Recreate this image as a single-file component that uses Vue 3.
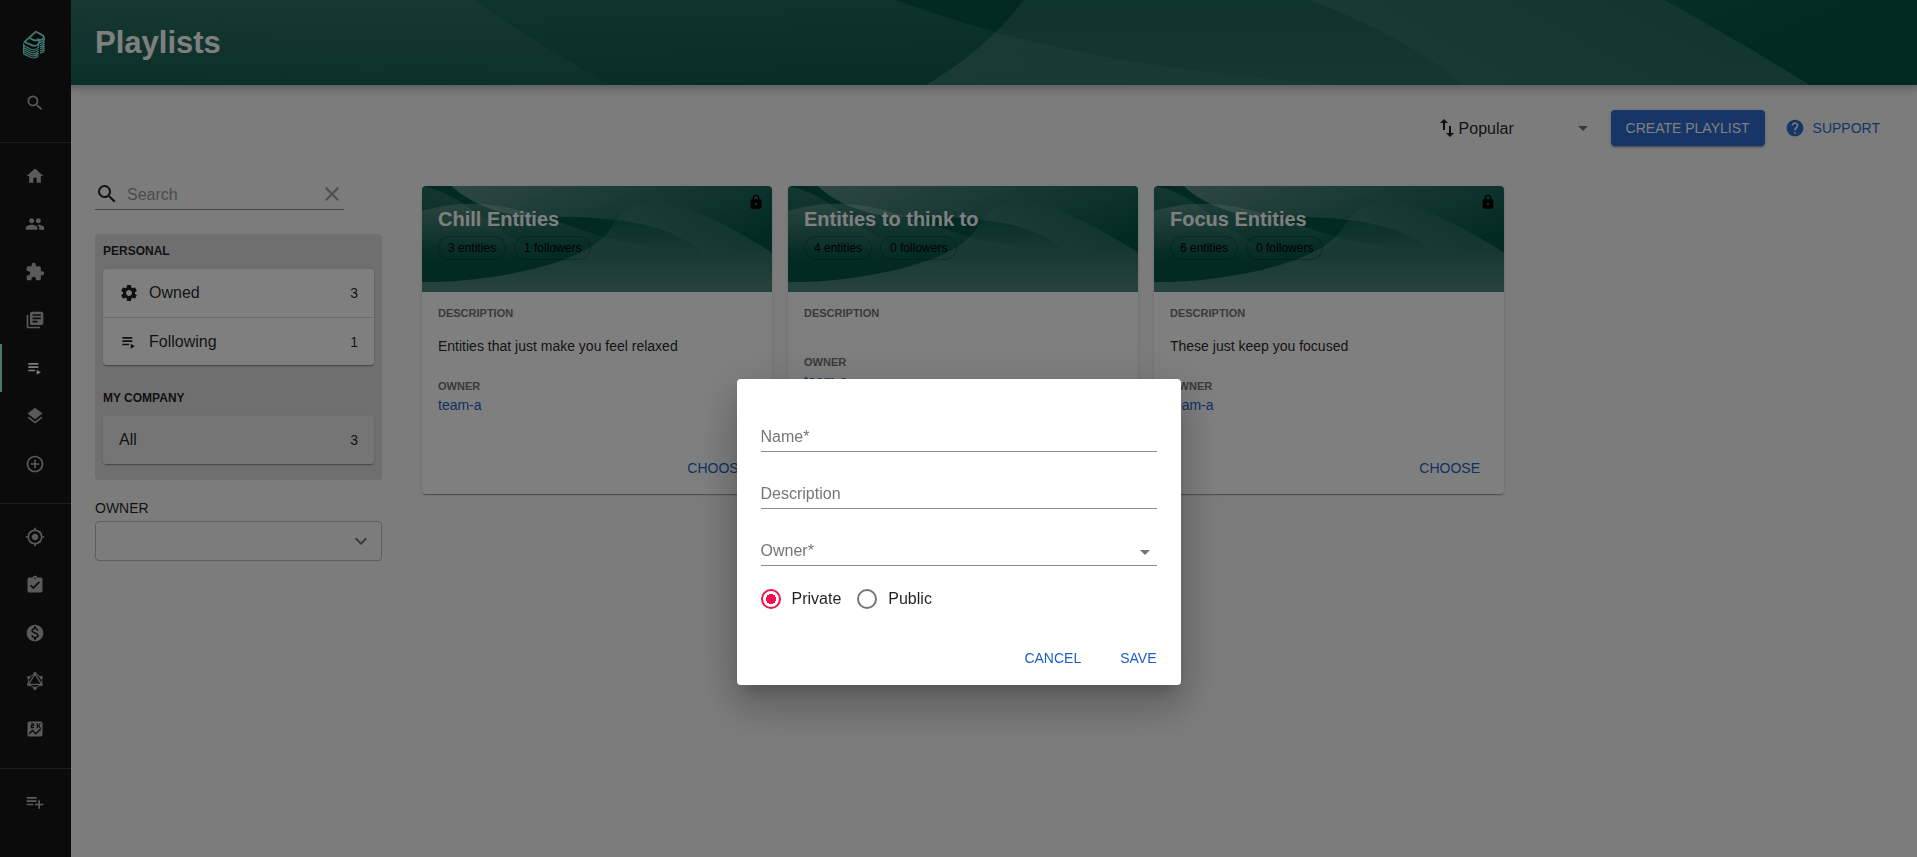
<script setup>
import { ref, h } from 'vue'

const icons = {
  search: 'M15.5 14h-.79l-.28-.27A6.471 6.471 0 0 0 16 9.5 6.5 6.5 0 1 0 9.5 16c1.61 0 3.09-.59 4.23-1.57l.27.28v.79l5 4.99L20.49 19l-4.99-5zm-6 0C7.01 14 5 11.99 5 9.5S7.01 5 9.5 5 14 7.01 14 9.5 11.99 14 9.5 14z',
  home: 'M10 20v-6h4v6h5v-8h3L12 3 2 12h3v8z',
  people: 'M16 11c1.66 0 2.99-1.34 2.99-3S17.66 5 16 5c-1.66 0-3 1.34-3 3s1.34 3 3 3zm-8 0c1.66 0 2.99-1.34 2.99-3S9.66 5 8 5C6.34 5 5 6.34 5 8s1.34 3 3 3zm0 2c-2.33 0-7 1.17-7 3.5V19h14v-2.5c0-2.33-4.67-3.5-7-3.5zm8 0c-.29 0-.62.02-.97.05 1.16.84 1.97 1.97 1.97 3.45V19h6v-2.5c0-2.33-4.67-3.5-7-3.5z',
  extension: 'M20.5 11H19V7c0-1.1-.9-2-2-2h-4V3.5C13 2.12 11.88 1 10.5 1S8 2.12 8 3.5V5H4c-1.1 0-1.99.9-1.99 2v3.8H3.5c1.49 0 2.7 1.21 2.7 2.7s-1.21 2.7-2.7 2.7H2V20c0 1.1.9 2 2 2h3.8v-1.5c0-1.49 1.21-2.7 2.7-2.7 1.49 0 2.7 1.21 2.7 2.7V22H17c1.1 0 2-.9 2-2v-4h1.5c1.38 0 2.5-1.12 2.5-2.5S21.88 11 20.5 11z',
  library: 'M4 6H2v14c0 1.1.9 2 2 2h14v-2H4V6zm16-4H8c-1.1 0-2 .9-2 2v12c0 1.1.9 2 2 2h12c1.1 0 2-.9 2-2V4c0-1.1-.9-2-2-2zm-1 9H9V9h10v2zm-4 4H9v-2h6v2zm4-8H9V5h10v2z',
  playlistPlay: 'M4 10h12v2H4zm0-4h12v2H4zm0 8h8v2H4zm10 0v6l5-3z',
  layers: 'M11.99 18.54l-7.37-5.73L3 14.07l9 7 9-7-1.63-1.27-7.38 5.74zM12 16l7.36-5.73L21 9l-9-7-9 7 1.63 1.27L12 16z',
  addCircle: 'M13 7h-2v4H7v2h4v4h2v-4h4v-2h-4V7zm-1-5C6.48 2 2 6.48 2 12s4.48 10 10 10 10-4.48 10-10S17.52 2 12 2zm0 18c-4.41 0-8-3.59-8-8s3.59-8 8-8 8 3.59 8 8-3.59 8-8 8z',
  location: 'M12 8c-2.21 0-4 1.79-4 4s1.79 4 4 4 4-1.79 4-4-1.79-4-4-4zm8.94 3A8.994 8.994 0 0 0 13 3.06V1h-2v2.06A8.994 8.994 0 0 0 3.06 11H1v2h2.06A8.994 8.994 0 0 0 11 20.94V23h2v-2.06A8.994 8.994 0 0 0 20.94 13H23v-2h-2.06zM12 19c-3.87 0-7-3.13-7-7s3.13-7 7-7 7 3.13 7 7-3.13 7-7 7z',
  assignment: 'M19 3h-4.18C14.4 1.84 13.3 1 12 1c-1.3 0-2.4.84-2.82 2H5c-1.1 0-2 .9-2 2v14c0 1.1.9 2 2 2h14c1.1 0 2-.9 2-2V5c0-1.1-.9-2-2-2zm-7 0c.55 0 1 .45 1 1s-.45 1-1 1-1-.45-1-1 .45-1 1-1zm-2 14l-4-4 1.41-1.41L10 14.17l6.59-6.59L18 9l-8 8z',
  money: 'M12 2C6.48 2 2 6.48 2 12s4.48 10 10 10 10-4.48 10-10S17.52 2 12 2zm1.41 16.09V20h-2.67v-1.93c-1.71-.36-3.16-1.46-3.27-3.4h1.96c.1 1.05.82 1.87 2.65 1.87 1.96 0 2.4-.98 2.4-1.59 0-.83-.44-1.61-2.67-2.14-2.48-.6-4.18-1.62-4.18-3.67 0-1.72 1.39-2.84 3.11-3.21V4h2.67v1.95c1.86.45 2.79 1.86 2.85 3.39H14.3c-.05-1.11-.64-1.87-2.22-1.87-1.5 0-2.4.68-2.4 1.64 0 .84.65 1.39 2.67 1.91s4.18 1.39 4.18 3.91c-.01 1.83-1.38 2.83-3.12 3.16z',
  score: 'M19 3H5c-1.1 0-2 .9-2 2v14c0 1.1.9 2 2 2h14c1.1 0 2-.9 2-2V5c0-1.1-.9-2-2-2zm-5 2h1.5v3l2-3h1.7l-2 3 2 3h-1.7l-2-3v3H14V5zM7 7.25h2.5V6.5H7V5h4v3.75H8.5v.75H11V11H7V7.25zM19 13l-6 6-4-4-4 4v-2.5l4-4 4 4 6-6V13z',
  playlistAdd: 'M14 10H2v2h12v-2zm0-4H2v2h12V6zm4 8v-4h-2v4h-4v2h4v4h2v-4h4v-2h-4zM2 16h8v-2H2v2z',
  settings: 'M19.14 12.94c.04-.3.06-.61.06-.94 0-.32-.02-.64-.07-.94l2.03-1.58c.18-.14.23-.41.12-.61l-1.92-3.32c-.12-.22-.37-.29-.59-.22l-2.39.96c-.5-.38-1.03-.7-1.62-.94l-.36-2.54c-.04-.24-.24-.41-.48-.41h-3.84c-.24 0-.43.17-.47.41l-.36 2.54c-.59.24-1.13.57-1.62.94l-2.39-.96c-.22-.08-.47 0-.59.22L2.74 8.87c-.12.21-.08.47.12.61l2.03 1.58c-.05.3-.09.63-.09.94s.02.64.07.94l-2.03 1.58c-.18.14-.23.41-.12.61l1.92 3.32c.12.22.37.29.59.22l2.39-.96c.5.38 1.03.7 1.62.94l.36 2.54c.05.24.24.41.48.41h3.84c.24 0 .44-.17.47-.41l.36-2.54c.59-.24 1.13-.56 1.62-.94l2.39.96c.22.08.47 0 .59-.22l1.92-3.32c.12-.22.07-.47-.12-.61l-2.01-1.58zM12 15.6c-1.98 0-3.6-1.62-3.6-3.6s1.62-3.6 3.6-3.6 3.6 1.62 3.6 3.6-1.62 3.6-3.6 3.6z',
  clear: 'M19 6.41L17.59 5 12 10.59 6.41 5 5 6.41 10.59 12 5 17.59 6.41 19 12 13.41 17.59 19 19 17.59 13.41 12z',
  help: 'M12 2C6.48 2 2 6.48 2 12s4.48 10 10 10 10-4.48 10-10S17.52 2 12 2zm1 17h-2v-2h2v2zm2.07-7.75l-.9.92C13.45 12.9 13 13.5 13 15h-2v-.5c0-1.1.45-2.1 1.17-2.83l1.24-1.26c.37-.36.59-.86.59-1.41 0-1.1-.9-2-2-2s-2 .9-2 2H8c0-2.21 1.79-4 4-4s4 1.79 4 4c0 .88-.36 1.68-.93 2.25z',
  lock: 'M18 8h-1V6c0-2.76-2.24-5-5-5S7 3.24 7 6v2H6c-1.1 0-2 .9-2 2v10c0 1.1.9 2 2 2h12c1.1 0 2-.9 2-2V10c0-1.1-.9-2-2-2zm-6 9c-1.1 0-2-.9-2-2s.9-2 2-2 2 .9 2 2-.9 2-2 2zm3.1-9H8.9V6c0-1.71 1.39-3.1 3.1-3.1 1.71 0 3.1 1.39 3.1 3.1v2z',
  sort: 'M9 3L5 6.99h3V14h2V6.99h3L9 3zm7 14.01V10h-2v7.01h-3L15 21l4-3.99h-3z',
  dropDown: 'M7 10l5 5 5-5z',
  expand: 'M16.59 8.59L12 13.17 7.41 8.59 6 10l6 6 6-6z',
  graph: 'M12 1.2a2 2 0 0 1 1.9 2.6l4.3 2.5a2 2 0 1 1 2.4 3.2v5a2 2 0 1 1-2.400 3.200l-4.300 2.500a2 2 0 1 1-3.800 0l-4.300-2.500a2 2 0 1 1-2.400-3.200v-5a2 2 0 1 1 2.400-3.200l4.300-2.500A2 2 0 0 1 12 1.200zM10.500 4.800L6.500 7.100a2 2 0 0 1-2.100 2.400v4.700zM13.500 4.800l6.100 9.400V9.500a2 2 0 0 1-2.100-2.400zM12 5.200L5.500 15.400h13zM6.500 16.800l4.100 2.400a2 2 0 0 1 2.800 0l4.100-2.400z',
}

const Icon = (props) =>
  h('svg', { viewBox: '0 0 24 24', class: 'icon', 'aria-hidden': 'true' }, [
    h('path', { d: icons[props.name], 'fill-rule': 'evenodd' }),
  ])
Icon.props = ['name']

const Wave = (props) => {
  const id = props.uid
  const gradient = (n, opacity, x1, y1, x2, y2) =>
    h('linearGradient', { id: `${id}-${n}`, x1, y1, x2, y2, gradientUnits: 'userSpaceOnUse' }, [
      h('stop', { 'stop-color': '#fff', 'stop-opacity': opacity }),
      h('stop', { offset: 1, 'stop-color': '#fff', 'stop-opacity': 0 }),
    ])
  const shape = (n, d) => h('path', { d, fill: `url(#${id}-${n})` })
  return h('svg', { viewBox: '0 0 1368 400', preserveAspectRatio: props.fit, 'aria-hidden': 'true' }, [
    h('defs', [
      gradient(0, 0.75, 602, -960.5, 1093.5, 272),
      gradient(1, 0.3, 684, 400, 684, 40),
      gradient(2, 0.33, 424, -48.1, 434.5, 275.1),
      gradient(3, 0.18, 500, 0, 470, 300),
    ]),
    shape(0, 'M437 116C223 116 112 0 112 0h1256v400c-82 0-225-21-282-109-112-175-436-175-649-175z'),
    shape(1, 'M1368 400V282C891-29 788 40 711 161 608 324 121 372 0 361v39h1368z'),
    shape(2, 'M1368 244v156H0V94c92-24 198-46 375 0l135 41c176 51 195 109 858 109z'),
    shape(3, 'M1252 400h116c-14-7-35-14-116-16-663-14-837-128-1013-258l-85-61C98 28 46 8 0 0v400h1252z'),
  ])
}
Wave.props = ['uid', 'fit']

const navGroups = [
  [
    { icon: 'home', label: 'Home' },
    { icon: 'people', label: 'Teams' },
    { icon: 'extension', label: 'APIs' },
    { icon: 'library', label: 'Docs' },
    { icon: 'playlistPlay', label: 'Playlists', active: true },
    { icon: 'layers', label: 'Explore' },
    { icon: 'addCircle', label: 'Create' },
  ],
  [
    { icon: 'location', label: 'Tech Radar' },
    { icon: 'assignment', label: 'Tasks' },
    { icon: 'money', label: 'Cost Insights' },
    { icon: 'graph', label: 'GraphiQL' },
    { icon: 'score', label: 'Score Board' },
  ],
  [{ icon: 'playlistAdd', label: 'Shortcuts' }],
]

const filters = [
  {
    title: 'PERSONAL',
    items: [
      { icon: 'settings', label: 'Owned', count: 3 },
      { icon: 'playlistPlay', label: 'Following', count: 1 },
    ],
  },
  { title: 'MY COMPANY', items: [{ label: 'All', count: 3, selected: true }] },
]

const playlists = [
  { name: 'Chill Entities', entities: 3, followers: 1, description: 'Entities that just make you feel relaxed', owner: 'team-a', locked: true },
  { name: 'Entities to think to', entities: 4, followers: 0, description: '', owner: 'team-a', locked: false },
  { name: 'Focus Entities', entities: 6, followers: 0, description: 'These just keep you focused', owner: 'team-a', locked: true },
]

const sort = ref('Popular')
const search = ref('')
const form = ref({ name: '', description: '', owner: '', access: 'private' })
</script>

<template>
  <div class="page">
    <nav class="sidebar" aria-label="Main">
      <a class="logo" href="#" aria-label="Backstage">
        <svg viewBox="0 0 22 28" aria-hidden="true">
          <path class="bill" d="M1 11.300L12 1.300c.7-.6 1.300-.6 2.100-.1l5.600 3.300c1.300.8 1.500 2.100.5 3.100-1.100 1.200-2.700 1.500-4.300 1 .9 1.700.6 3.400-.8 4.700-2 1.800-4.600 1.900-7 .6L1.600 11M6.500 6.700l3.700 2.200c1.700.9 3.400.8 5.700-.3" />
          <path d="M.6 12.200v2.300l7 3.500c2.900 1.200 6.300.3 8-2v-2.800M.6 14v9M.6 16.600l7 3.400c2.900 1.200 6.300.3 8-2M.6 18.700l7 3.400c2.900 1.200 6.300.3 8-2M.6 20.800l7 3.400c2.900 1.200 6.300.3 8-2M.6 22.900l7 3.400c2.900 1.200 6.300.3 8-2M17 11.400c2.200-.2 3.900-1.300 4.400-2.900V6.800M17 13.500c2.200-.2 3.900-1.300 4.400-2.900M17 15.600c2.200-.2 3.900-1.300 4.400-2.900M17 17.700c2.200-.2 3.900-1.300 4.400-2.900M17 19.800c2.200-.2 3.900-1.300 4.400-2.900M17 21.900c2.200-.2 3.900-1.300 4.400-2.900" />
        </svg>
      </a>
      <button class="nav-item" type="button" aria-label="Search"><Icon name="search" /></button>
      <template v-for="(group, i) in navGroups" :key="i">
        <hr />
        <a v-for="item in group" :key="item.label" href="#" class="nav-item" :class="{ active: item.active }" :aria-label="item.label">
          <Icon :name="item.icon" />
        </a>
      </template>
    </nav>

    <div class="body">
      <header class="header">
        <Wave uid="head" fit="xMidYMid slice" class="wave" />
        <h1>Playlists</h1>
      </header>

      <main class="content">
        <div class="toolbar">
          <div class="sort">
            <Icon name="sort" />
            <select v-model="sort" aria-label="Sort by">
              <option>Popular</option>
              <option>Alphabetical</option>
            </select>
            <Icon name="dropDown" class="arrow" />
          </div>
          <button class="create" type="button">CREATE PLAYLIST</button>
          <button class="support" type="button"><Icon name="help" />SUPPORT</button>
        </div>

        <div class="columns">
          <aside>
            <div class="search">
              <Icon name="search" />
              <input v-model="search" type="text" placeholder="Search" aria-label="Search" />
              <button type="button" aria-label="Clear"><Icon name="clear" /></button>
            </div>
            <div class="filters">
              <section v-for="group in filters" :key="group.title">
                <h2>{{ group.title }}</h2>
                <ul>
                  <li v-for="item in group.items" :key="item.label">
                    <button type="button" :class="{ selected: item.selected }">
                      <Icon v-if="item.icon" :name="item.icon" />
                      <span class="name">{{ item.label }}</span>
                      <span class="count">{{ item.count }}</span>
                    </button>
                  </li>
                </ul>
              </section>
            </div>
            <label class="owner-label" for="owner-filter">OWNER</label>
            <div class="owner-box">
              <input id="owner-filter" type="text" />
              <Icon name="expand" />
            </div>
          </aside>

          <div class="cards">
            <article v-for="(list, i) in playlists" :key="list.name" class="card">
              <div class="card-head">
                <Wave :uid="'card' + i" fit="xMinYMin slice" class="wave" />
                <Icon v-if="list.locked" name="lock" class="lock" />
                <h3>{{ list.name }}</h3>
                <div class="chips">
                  <span>{{ list.entities }} entities</span>
                  <span>{{ list.followers }} followers</span>
                </div>
              </div>
              <div class="card-body">
                <h4>DESCRIPTION</h4>
                <p>{{ list.description }}</p>
                <h4>OWNER</h4>
                <a href="#">{{ list.owner }}</a>
              </div>
              <div class="card-actions"><button type="button">CHOOSE</button></div>
            </article>
          </div>
        </div>
      </main>
    </div>

    <div class="backdrop">
      <form class="dialog" role="dialog" aria-modal="true" aria-label="Create playlist" @submit.prevent>
        <div class="fields">
          <input v-model="form.name" type="text" placeholder="Name*" aria-label="Name" />
          <input v-model="form.description" type="text" placeholder="Description" aria-label="Description" />
          <div class="select">
            <select v-model="form.owner" aria-label="Owner">
              <option value="" disabled>Owner*</option>
              <option>team-a</option>
            </select>
            <Icon name="dropDown" />
          </div>
        </div>
        <div class="radios">
          <label><input v-model="form.access" type="radio" name="access" value="private" />Private</label>
          <label><input v-model="form.access" type="radio" name="access" value="public" />Public</label>
        </div>
        <div class="dialog-actions">
          <button type="button">CANCEL</button>
          <button type="submit">SAVE</button>
        </div>
      </form>
    </div>
  </div>
</template>

<style>
body {
  margin: 0;
  background: #f8f8f8;
}
</style>

<style scoped>
.page,
.page * {
  box-sizing: border-box;
}
.page {
  display: flex;
  min-height: 100vh;
  font-family: "Helvetica Neue", "Liberation Sans", Arial, sans-serif;
  font-size: 14px;
  color: rgba(0, 0, 0, 0.87);
}
button,
input,
select {
  font: inherit;
  color: inherit;
  background: none;
  border: 0;
  border-radius: 0;
  padding: 0;
  margin: 0;
  outline: 0;
}
select {
  appearance: none;
}
a {
  color: #1f5fc4;
  text-decoration: none;
}
h1, h2, h3, h4, p, ul {
  margin: 0;
  padding: 0;
}
.icon {
  width: 20px;
  height: 20px;
  fill: currentColor;
  flex: none;
}

.sidebar {
  width: 71px;
  flex: none;
  background: #171717;
  display: flex;
  flex-direction: column;
  position: relative;
  z-index: 1;
}
.logo {
  height: 79px;
  padding: 31px 0 0 23px;
}
.logo svg {
  width: 22px;
  height: 28px;
  display: block;
  fill: none;
  stroke: #7df3e1;
  stroke-width: 1.2;
}
.logo .bill {
  stroke-width: 1.8;
}
.nav-item {
  height: 48px;
  display: flex;
  align-items: center;
  justify-content: center;
  color: #b5b5b5;
  border-left: 2px solid transparent;
  border-right: 3px solid transparent;
}
.nav-item.active {
  color: #fff;
  border-left-color: #9bf0e1;
}
hr {
  width: 100%;
  height: 1px;
  border: 0;
  margin: 15px 0 9px;
  background: #383838;
}

.body {
  flex: 1;
  min-width: 0;
}
.header {
  position: relative;
  height: 85px;
  padding: 0 24px;
  display: flex;
  align-items: center;
  background: #045446;
  box-shadow: 0 0 8px 3px rgba(20, 20, 20, 0.3);
}
.wave {
  position: absolute;
  inset: 0;
  width: 100%;
  height: 100%;
}
h1 {
  position: relative;
  font-size: 31px;
  line-height: 38px;
  color: #fff;
}
.content {
  padding: 25px 29px 24px 24px;
}
.toolbar {
  display: flex;
  justify-content: flex-end;
  align-items: center;
}
.sort {
  position: relative;
  display: flex;
  align-items: center;
  margin-right: 16px;
}
.sort .icon {
  width: 24px;
  height: 24px;
}
.sort select {
  width: 136px;
  height: 32px;
  font-size: 16px;
}
.sort .arrow {
  position: absolute;
  right: 0;
  color: #757575;
  pointer-events: none;
}
.create {
  height: 36px;
  padding: 0 15px;
  border-radius: 4px;
  background: #2e6bce;
  color: #fff;
  box-shadow: 0 3px 1px -2px rgba(0, 0, 0, 0.2), 0 2px 2px rgba(0, 0, 0, 0.14), 0 1px 5px rgba(0, 0, 0, 0.12);
}
.support {
  height: 36px;
  margin-left: 12px;
  padding: 0 8px;
  display: flex;
  align-items: center;
  gap: 8px;
  color: #2e6bce;
}

.columns {
  display: grid;
  grid-template-columns: 287px 1fr;
  column-gap: 40px;
  align-items: start;
  margin-top: 32px;
  padding-right: 18px;
}
.search {
  display: flex;
  align-items: center;
  width: 249px;
  height: 32px;
  border-bottom: 1px solid #8a8a8a;
}
.search .icon {
  width: 24px;
  height: 24px;
  display: block;
}
.search input {
  flex: 1;
  min-width: 0;
  height: 31px;
  margin-left: 8px;
  padding-top: 2px;
  font-size: 16px;
}
.search input::placeholder {
  color: #999;
  opacity: 1;
}
.search button {
  color: #a0a0a0;
}
.filters {
  margin-top: 24px;
  padding: 0 8px 16px;
  border-radius: 4px;
  background: #dedede;
}
.filters section + section {
  margin-top: 16px;
}
h2 {
  padding: 9px 0 10px;
  font-size: 12px;
  line-height: 16px;
}
ul {
  list-style: none;
  border-radius: 4px;
  overflow: hidden;
  background: #fff;
  box-shadow: 0 2px 1px -1px rgba(0, 0, 0, 0.2), 0 1px 1px rgba(0, 0, 0, 0.14), 0 1px 3px rgba(0, 0, 0, 0.12);
}
li {
  height: 48px;
}
li + li {
  border-top: 1px solid #dadada;
}
li button {
  width: 100%;
  height: 100%;
  padding: 0 16px;
  display: flex;
  align-items: center;
  text-align: left;
}
li .selected {
  background: #ebebeb;
}
li .icon {
  margin-right: 10px;
}
.name {
  flex: 1;
  font-size: 16px;
}
.owner-label {
  display: block;
  margin-top: 20px;
  line-height: 16px;
}
.owner-box {
  display: flex;
  align-items: center;
  height: 40px;
  margin-top: 5px;
  padding: 0 8px;
  border: 1px solid #bcbcbc;
  border-radius: 4px;
}
.owner-box input {
  flex: 1;
  min-width: 0;
}
.owner-box .icon {
  width: 24px;
  height: 24px;
  color: #757575;
}

.cards {
  display: grid;
  grid-template-columns: repeat(auto-fill, minmax(320px, 1fr));
  gap: 16px;
  margin-top: 8px;
}
.card {
  display: flex;
  flex-direction: column;
  border-radius: 4px;
  overflow: hidden;
  background: #fff;
  box-shadow: 0 2px 1px -1px rgba(0, 0, 0, 0.2), 0 1px 1px rgba(0, 0, 0, 0.14), 0 1px 3px rgba(0, 0, 0, 0.12);
}
.card-head {
  position: relative;
  height: 106px;
  padding: 20px 16px 0;
  background: #045446;
}
.lock {
  position: absolute;
  top: 8px;
  right: 8px;
  width: 16px;
  height: 16px;
  color: #000;
}
h3 {
  position: relative;
  font-size: 20px;
  line-height: 26px;
  color: #fff;
}
.chips {
  position: relative;
  display: flex;
  gap: 8px;
  margin-top: 4px;
}
.chips span {
  height: 24px;
  padding: 0 9px;
  border: 1px solid rgba(0, 0, 0, 0.26);
  border-radius: 12px;
  font-size: 12px;
  line-height: 22px;
  color: #000;
}
.card-body {
  flex: 1;
  display: flex;
  flex-direction: column;
  align-items: flex-start;
  padding: 13px 16px 34px;
}
h4 {
  font-size: 11px;
  line-height: 16px;
  color: #757575;
}
.card-body p {
  margin: 13px 0 20px;
  line-height: 24px;
}
.card-body a {
  line-height: 22px;
}
.card-actions {
  display: flex;
  justify-content: flex-end;
  padding: 0 16px 8px;
}
.card-actions button {
  height: 36px;
  padding: 0 8px;
  color: #1f5fc4;
}

.backdrop {
  position: fixed;
  inset: 0;
  z-index: 2;
  display: flex;
  justify-content: center;
  align-items: flex-start;
  padding-top: 379px;
  background: rgba(0, 0, 0, 0.5);
}
.dialog {
  width: 444px;
  max-width: 100%;
  padding: 41px 24px 9px;
  border-radius: 4px;
  background: #fff;
  box-shadow: 0 11px 15px -7px rgba(0, 0, 0, 0.2), 0 24px 38px 3px rgba(0, 0, 0, 0.14), 0 9px 46px 8px rgba(0, 0, 0, 0.12);
}
.fields {
  display: flex;
  flex-direction: column;
  gap: 25px;
}
.fields input,
.select {
  height: 32px;
  border-bottom: 1px solid #8d8d8d;
  font-size: 16px;
}
.fields input,
.select select {
  padding-top: 2px;
}
.fields input::placeholder {
  color: #757575;
  opacity: 1;
}
.select {
  position: relative;
}
.select select {
  width: 100%;
  height: 31px;
  color: #757575;
}
.select .icon {
  position: absolute;
  top: 6px;
  right: 0;
  width: 24px;
  height: 24px;
  color: #757575;
  pointer-events: none;
}
.radios {
  display: flex;
  gap: 16px;
  margin-top: 12px;
}
.radios label {
  display: flex;
  align-items: center;
  gap: 11px;
  height: 42px;
  font-size: 16px;
}
.radios input {
  appearance: none;
  width: 20px;
  height: 20px;
  border: 2px solid #757575;
  border-radius: 50%;
}
.radios input:checked {
  border-color: #f50f50;
  background: radial-gradient(circle, #f50f50 5px, transparent 5px);
}
.dialog-actions {
  display: flex;
  justify-content: flex-end;
  gap: 39px;
  margin-top: 20px;
}
.dialog-actions button {
  height: 36px;
  color: #1f5fc4;
}
</style>
